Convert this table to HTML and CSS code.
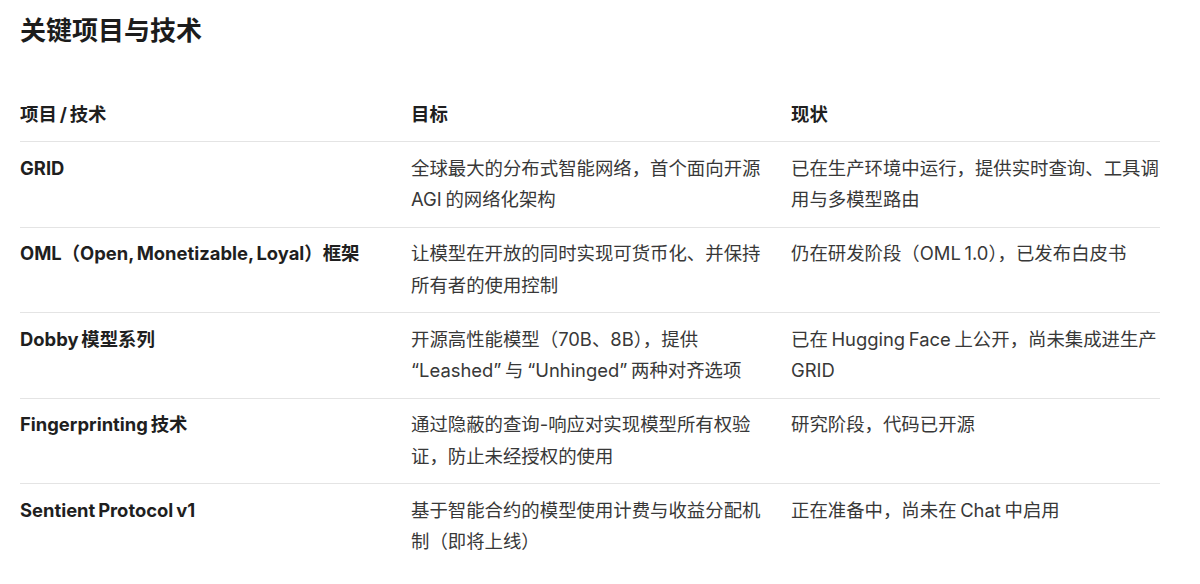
FILE: index.html
```html
<!DOCTYPE html>
<html lang="zh-CN">
<head>
<meta charset="utf-8">
<title>关键项目与技术</title>
<link rel="stylesheet" href="styles.css">
</head>
<body>
<main class="page">
  <h2 class="title">关键项目与技术</h2>
  <div class="table">
    <div class="row head">
      <div class="cell">项目 / 技术</div>
      <div class="cell">目标</div>
      <div class="cell">现状</div>
    </div>
    <div class="row">
      <div class="cell name">GRID</div>
      <div class="cell">全球最大的分布式智能网络，首个面向开源 AGI 的网络化架构</div>
      <div class="cell">已在生产环境中运行，提供实时查询、工具调用与多模型路由</div>
    </div>
    <div class="row">
      <div class="cell name">OML（Open, Monetizable, Loyal）框架</div>
      <div class="cell">让模型在开放的同时实现可货币化、并保持所有者的使用控制</div>
      <div class="cell">仍在研发阶段（OML 1.0），已发布白皮书</div>
    </div>
    <div class="row">
      <div class="cell name">Dobby 模型系列</div>
      <div class="cell">开源高性能模型（70B、8B），提供 “Leashed” 与 “Unhinged” 两种对齐选项</div>
      <div class="cell">已在 Hugging Face 上公开，尚未集成进生产 GRID</div>
    </div>
    <div class="row">
      <div class="cell name">Fingerprinting 技术</div>
      <div class="cell">通过隐蔽的查询-响应对实现模型所有权验证，防止未经授权的使用</div>
      <div class="cell">研究阶段，代码已开源</div>
    </div>
    <div class="row last">
      <div class="cell name">Sentient Protocol v1</div>
      <div class="cell">基于智能合约的模型使用计费与收益分配机制（即将上线）</div>
      <div class="cell">正在准备中，尚未在 Chat 中启用</div>
    </div>
  </div>
</main>
</body>
</html>
```

FILE: styles.css
```css
html, body {
  margin: 0;
  padding: 0;
  background: #ffffff;
}

body {
  font-family: Inter, "Noto Sans CJK SC", "Noto Sans", sans-serif;
  color: #383838;
}

.page {
  padding: 14px 0 0 20px;
}

.title {
  margin: 0 0 40px 0;
  font-size: 26px;
  line-height: 34px;
  font-weight: 700;
  color: #1c1c1c;
}

.table {
  width: 1140px;
  font-size: 18.4px;
  line-height: 31.5px;
  word-spacing: -1.5px;
}

.row {
  display: grid;
  grid-template-columns: 391px 380px 369px;
  border-bottom: 1px solid #e4e4e4;
}

.row.last {
  border-bottom: none;
}

.cell {
  padding: 10.75px 28px 10.75px 0;
}

.cell:last-child {
  padding-right: 0;
}

.head .cell,
.cell.name {
  font-weight: 700;
  color: #1f1f1f;
}
```
